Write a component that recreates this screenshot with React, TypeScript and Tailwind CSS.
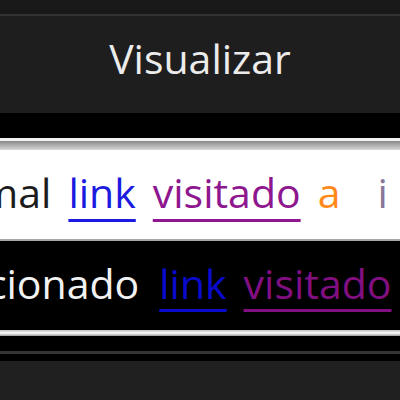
export default function App() {
  return (
    <div
      className="w-[400px] h-[400px] overflow-hidden bg-black flex flex-col text-[41px] leading-none"
      style={{ fontFamily: '"Open Sans", "Noto Sans", sans-serif' }}
    >
      <div className="h-[14px] bg-[#191919]" />
      <div className="h-[2px] bg-[#333333]" />
      <div className="h-[97px] bg-[#1e1e1e] flex items-center justify-center">
        <span className="text-[#ececec] -mt-[12px]">Visualizar</span>
      </div>
      <div className="h-[25px] bg-black" />

      {/* preview light */}
      <div className="h-[3px] bg-[#f2f2f2]" />
      <div className="h-[9px] bg-gradient-to-b from-[#8a8a8a] to-[#d8d8d8]" />
      <div className="h-[89px] bg-white flex items-center">
        <div className="whitespace-nowrap -ml-[92px] -mt-[4px] flex gap-[17px]">
          <span className="text-[#1c1c1c]">Normal</span>
          <span className="text-[#1a1ae0] underline decoration-[3px] underline-offset-[11px]">link</span>
          <span className="text-[#8e168e] underline decoration-[3px] underline-offset-[11px]">visitado</span>
          <span className="text-[#ff8a1a]">a</span>
          <span className="text-[#86789a] ml-[20px]">i</span>
        </div>
      </div>
      <div className="h-[2px] bg-[#a8a8a8]" />

      {/* preview dark */}
      <div className="h-[89px] bg-black flex items-center">
        <div className="whitespace-nowrap -ml-[92px] -mt-[4px] flex gap-[17px]">
          <span className="text-[#f2f2f2]">Selecionado</span>
          <span className="text-[#0a0acc] ml-[3px] underline decoration-[3px] underline-offset-[10px]">link</span>
          <span className="text-[#820f82] underline decoration-[3px] underline-offset-[10px]">visitado</span>
        </div>
      </div>
      <div className="h-[6px] bg-gradient-to-b from-[#bdbdbd] via-white to-[#9a9a9a]" />
      <div className="h-[15px] bg-black" />
      <div className="h-[3px] bg-[#343434]" />
      <div className="h-[7px] bg-black" />
      <div className="flex-1 bg-[#202020]" />
    </div>
  );
}
